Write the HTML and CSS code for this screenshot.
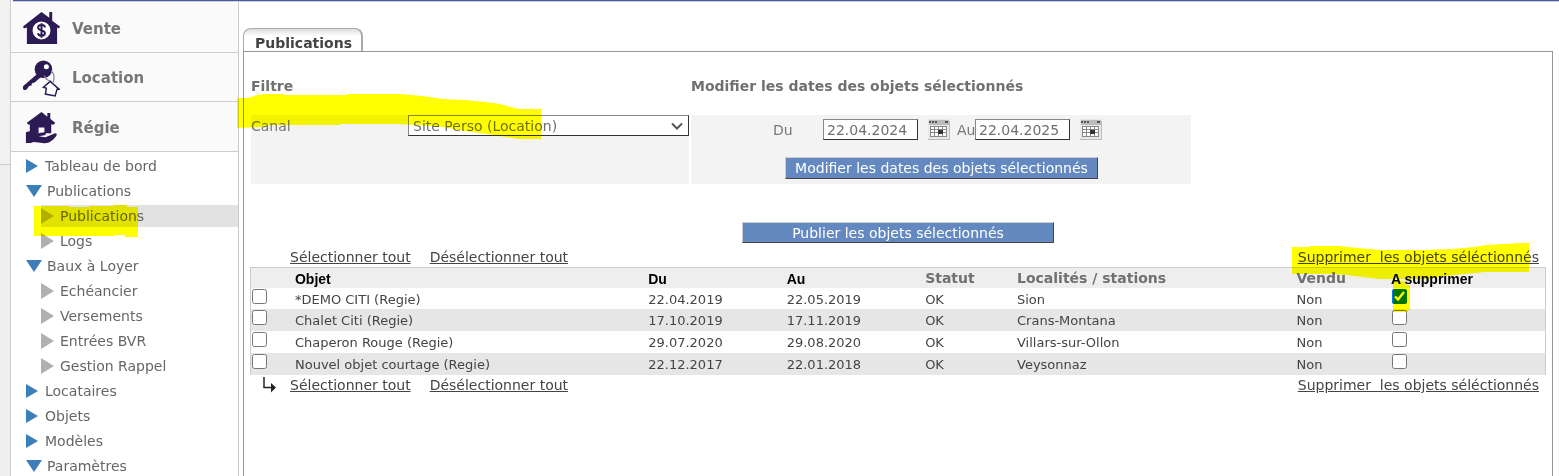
FILE: index.html
```html
<!DOCTYPE html>
<html lang="fr">
<head>
<meta charset="utf-8">
<title>Publications</title>
<link rel="stylesheet" href="styles.css">
</head>
<body>
<div class="page">
  <div class="gutter"></div>
  <div class="shell">
    <div class="topline"></div>
    <div class="columns">
      <nav class="sidebar">
        <a class="module" href="#">
          <svg class="module-icon" viewBox="0 0 38 36" aria-hidden="true"><path fill="#2b1a54" d="M19 1 0 16l1 2 3-1v17h31V17l2 1 1-2-8-6V1h-3v6z"/><circle cx="19" cy="20" r="9.200" fill="#fff"/><path d="M22.500 17c0-2-2-2.500-3.500-2.500s-3.500.5-3.500 2.500 2 2.500 3.500 3 3.500 1 3.500 3-2 2.500-3.500 2.500-3.500-.5-3.500-2.500M19 12.500v15" fill="none" stroke="#2b1a54" stroke-width="2"/></svg>
          <span>Vente</span>
        </a>
        <a class="module" href="#">
          <svg class="module-icon" viewBox="0 0 38 38" aria-hidden="true"><path d="M16 13 0 27v3l2 1 2-1 2-3 3-1v-2l3-1 7-6z" fill="#2b1a54"/><circle cx="21" cy="9.500" r="9" fill="#2b1a54"/><circle cx="24" cy="7" r="2.600" fill="#fff"/><path d="M29 11c4 4 3 8 2 12M22 16c1 4 3 5 7 6" fill="none" stroke="#8d84a3" stroke-width="1.300"/><path d="m28 22-7 6 3 1-1 6 10 2 2-7h2z" fill="#fff" stroke="#2b1a54" stroke-width="1.500"/></svg>
          <span>Location</span>
        </a>
        <a class="module" href="#">
          <svg class="module-icon" viewBox="0 0 38 36" aria-hidden="true"><path d="M19 2 4 13l1 2h2v8l9 1v-6h6v6h7v-9h3l1-2-5-4V3h-3v4z" fill="#2b1a54"/><path d="M3 23c4-2 8-1 12 1l7-1c2 0 2 3 0 3l-6 1 7 1 10-4c2 0 2 1 1 3-4 5-8 8-14 7L11 33l-3 1H3z" fill="#2b1a54"/></svg>
          <span>Régie</span>
        </a>
        <ul class="menu">
          <li><a class="item closed" href="#">Tableau de bord</a></li>
          <li><a class="item open" href="#">Publications</a>
            <ul class="submenu">
              <li><a class="item closed current" href="#">Publications</a></li>
              <li><a class="item closed" href="#">Logs</a></li>
            </ul>
          </li>
          <li><a class="item open" href="#">Baux à Loyer</a>
            <ul class="submenu">
              <li><a class="item closed" href="#">Echéancier</a></li>
              <li><a class="item closed" href="#">Versements</a></li>
              <li><a class="item closed" href="#">Entrées BVR</a></li>
              <li><a class="item closed" href="#">Gestion Rappel</a></li>
            </ul>
          </li>
          <li><a class="item closed" href="#">Locataires</a></li>
          <li><a class="item closed" href="#">Objets</a></li>
          <li><a class="item closed" href="#">Modèles</a></li>
          <li><a class="item open" href="#">Paramètres</a></li>
        </ul>
      </nav>
      <main class="main">
        <a class="tab" href="#">Publications</a>
        <section class="panel">
          <div class="filters">
            <h2>Filtre</h2>
            <h2>Modifier les dates des objets sélectionnés</h2>
            <div class="filter-box channel">
              <label for="canal">Canal</label>
              <div class="select-wrap">
                <select id="canal"><option>Site Perso (Location)</option></select>
                <svg class="chevron" viewBox="0 0 12 8" aria-hidden="true"><path d="m1 1.500 5 5 5-5" fill="none" stroke="#555" stroke-width="2"/></svg>
              </div>
            </div>
            <div class="filter-box dates">
              <div class="date-row">
                <label class="from" for="du">Du</label>
                <input class="date" id="du" type="text" value="22.04.2024">
                <button class="cal" type="button" aria-label="Choisir la date de début"><svg viewBox="0 0 22 21" aria-hidden="true"><path fill="#e8e8e8" d="M0 0h22v21H0z"/><path fill="#bbb" d="M1 1h20v5H1zM21 2h1v19h-1zM0 20h22v1H0z"/><path fill="#555" d="M1 2h2v2H1zm3 0h2v2H4zm3 0h2v2H7zm10 0h3v2h-3z"/><path fill="#fff" d="M2 7h17v11H2z"/><path d="M2 7.500h17M2 10.500h17M2 13.500h17M2 17.500h17M2.500 7v11M6.500 7v11M10.500 7v11M14.500 7v11M18.500 7v11" stroke="#888"/><path fill="#333" d="M10 11h5v4h-5z"/></svg></button>
                <label class="to" for="au">Au</label>
                <input class="date" id="au" type="text" value="22.04.2025">
                <button class="cal" type="button" aria-label="Choisir la date de fin"><svg viewBox="0 0 22 21" aria-hidden="true"><path fill="#e8e8e8" d="M0 0h22v21H0z"/><path fill="#bbb" d="M1 1h20v5H1zM21 2h1v19h-1zM0 20h22v1H0z"/><path fill="#555" d="M1 2h2v2H1zm3 0h2v2H4zm3 0h2v2H7zm10 0h3v2h-3z"/><path fill="#fff" d="M2 7h17v11H2z"/><path d="M2 7.500h17M2 10.500h17M2 13.500h17M2 17.500h17M2.500 7v11M6.500 7v11M10.500 7v11M14.500 7v11M18.500 7v11" stroke="#888"/><path fill="#333" d="M10 11h5v4h-5z"/></svg></button>
              </div>
              <button class="action" type="button">Modifier les dates des objets sélectionnés</button>
            </div>
          </div>
          <button class="action publish" type="button">Publier les objets sélectionnés</button>
          <div class="links top">
            <span class="lead"></span>
            <a href="#">Sélectionner tout</a>
            <a href="#">Désélectionner tout</a>
            <a class="remove" href="#">Supprimer&nbsp; les objets séléctionnés</a>
          </div>
          <table class="objects">
            <colgroup><col class="c-check"><col class="c-name"><col class="c-date"><col class="c-date"><col class="c-status"><col class="c-place"><col class="c-sold"><col></colgroup>
            <thead>
              <tr><th></th><th>Objet</th><th>Du</th><th>Au</th><th class="soft">Statut</th><th class="soft">Localités / stations</th><th class="soft">Vendu</th><th>A supprimer</th></tr>
            </thead>
            <tbody>
              <tr><td class="tick"><input type="checkbox" aria-label="Sélectionner *DEMO CITI"></td><td>*DEMO CITI (Regie)</td><td>22.04.2019</td><td>22.05.2019</td><td>OK</td><td>Sion</td><td>Non</td><td class="tick"><input type="checkbox" checked aria-label="Supprimer *DEMO CITI"></td></tr>
              <tr><td class="tick"><input type="checkbox" aria-label="Sélectionner Chalet Citi"></td><td>Chalet Citi (Regie)</td><td>17.10.2019</td><td>17.11.2019</td><td>OK</td><td>Crans-Montana</td><td>Non</td><td class="tick"><input type="checkbox" aria-label="Supprimer Chalet Citi"></td></tr>
              <tr><td class="tick"><input type="checkbox" aria-label="Sélectionner Chaperon Rouge"></td><td>Chaperon Rouge (Regie)</td><td>29.07.2020</td><td>29.08.2020</td><td>OK</td><td>Villars-sur-Ollon</td><td>Non</td><td class="tick"><input type="checkbox" aria-label="Supprimer Chaperon Rouge"></td></tr>
              <tr><td class="tick"><input type="checkbox" aria-label="Sélectionner Nouvel objet courtage"></td><td>Nouvel objet courtage (Regie)</td><td>22.12.2017</td><td>22.01.2018</td><td>OK</td><td>Veysonnaz</td><td>Non</td><td class="tick"><input type="checkbox" aria-label="Supprimer Nouvel objet courtage"></td></tr>
            </tbody>
          </table>
          <div class="links">
            <span class="lead"><svg class="hook" viewBox="0 0 14 16" aria-hidden="true"><path d="M1 0v10.500h9" fill="none" stroke="#222" stroke-width="1.500"/><path d="M8 6v9.500l5-5z" fill="#222"/></svg></span>
            <a href="#">Sélectionner tout</a>
            <a href="#">Désélectionner tout</a>
            <a class="remove" href="#">Supprimer&nbsp; les objets séléctionnés</a>
          </div>
        </section>
      </main>
    </div>
  </div>
</div>
<svg class="marker" width="1559" height="476" aria-hidden="true">
  <path d="M237 98H248L257 95 265 94H284V95H347V94H397L412 95 430 97 443 99 464 100 485 102 500 104 518 109H541V139H518L500 136 486 134 465 131 443 127 420 125 394 124H340V125H270L261 127 237 128z"/>
  <path d="M34 206h35v1h21v-1h24v-1h13v2h11v30h-13v-2h-9l-2 1H34z"/>
  <path d="M1292 247h17v-1h30l18 2 24 2h42l30-1 21-2 13-2 17-1 17-1h8v29h-44l-20 2-20 2-17 3h-48l-18-2-15-2-15-1h-40z"/>
  <path d="M1393 281h13v4h4v25h-2v2h-15z"/>
</svg>
</body>
</html>
```
FILE: styles.css
```css
* { box-sizing: border-box; }
body {
  margin: 0;
  background: #fff;
  color: #666;
  font: 14px/18px Verdana, "DejaVu Sans", sans-serif;
  position: relative;
  overflow: hidden;
}
a { color: inherit; text-decoration: none; }
ul { list-style: none; margin: 0; padding: 0; }
.page { display: flex; min-height: 100vh; }
.gutter {
  width: 11px;
  flex: none;
  background: linear-gradient(#efefef, #efefef) 0 165px no-repeat, linear-gradient(#ccc, #ccc) 0 164px / 100% 1px no-repeat, #f1f1f1;
  border-right: 1px solid #ccc;
}
.shell { flex: 1; min-width: 0; display: flex; flex-direction: column; }
.topline { height: 2px; margin-left: 2px; background: #4a5c99; border-bottom: 1px solid #c9cbe0; }
.columns { display: flex; flex: 1; }

.sidebar { width: 228px; flex: none; padding-top: 1px; border-right: 1px solid #ccc; height: calc(100vh - 2px); overflow: hidden; }
.module {
  display: flex;
  align-items: center;
  gap: 12px;
  height: 49px;
  padding: 2px 0 0 12px;
  background: #fafafa;
  border-bottom: 1px solid #ccc;
  color: #777;
  font-size: 15px;
  font-weight: bold;
}
.module:nth-child(1), .module:nth-child(3) { height: 50px; }
.module-icon { width: 37px; height: 37px; }
.menu { padding-top: 3px; }
.item { display: flex; align-items: center; height: 22px; margin-bottom: 3px; margin-left: 15px; }
.item::before { content: ""; flex: none; background: #3c7fb8; }
.closed::before { width: 12px; height: 14px; margin-right: 7px; clip-path: polygon(0 0, 100% 50%, 0 100%); }
.open::before { width: 16px; height: 12px; margin-right: 5px; clip-path: polygon(0 0, 100% 0, 50% 100%); }
.submenu .item { margin-left: 30px; }
.submenu .item::before { background: #b0b0b0; width: 13px; height: 16px; margin-right: 6px; }
.submenu .current { background: #e2e2e2; }

.main { flex: 1; min-width: 0; display: flex; flex-direction: column; align-items: flex-start; padding: 26px 6px 0 4px; }
.tab {
  padding: 5px 9px 0 11px;
  height: 23px;
  border: 1px solid #aaa;
  border-width: 1px 2px 0 1px;
  border-radius: 8px 8px 0 0;
  background: linear-gradient(#ddd, #fff 7px);
  color: #444;
  font-weight: bold;
}
.panel { align-self: stretch; flex: 1; border: 1px solid #909898; border-bottom: 0; padding: 25px 6px 0; }
.filters { display: grid; grid-template-columns: 438px 500px; column-gap: 2px; padding-left: 1px; }
h2 { margin: 0; font: bold 14px/18px Verdana, "DejaVu Sans", sans-serif; height: 38px; color: #707070; }
.filter-box { background: #f3f3f3; height: 69px; color: #777; }
.channel { display: flex; justify-content: space-between; align-items: flex-start; }
.channel label { padding-top: 2px; }
.select-wrap { position: relative; width: 281px; }
.select-wrap select { width: 100%; }
.chevron { position: absolute; right: 6px; top: 7px; width: 12px; height: 8px; pointer-events: none; }
select, .date {
  appearance: none;
  height: 21px;
  margin: 0;
  padding: 0 4px;
  border: 1px solid;
  border-color: #888 #333 #333 #888;
  border-radius: 0;
  background: #fff;
  color: #707070;
  font: 14px/18px Verdana, "DejaVu Sans", sans-serif;
}
.date-row { display: flex; align-items: center; padding: 4px 0 0 82px; }
.from { width: 50px; }
.to { margin-left: 7px; width: 18px; }
.date { width: 95px; padding: 0 3px; }
.cal { width: 22px; height: 21px; padding: 0; margin-left: 10px; border: 0; background: none; }
.cal svg { display: block; }
.dates { display: flex; flex-direction: column; gap: 17px; }
.action {
  height: 22px;
  padding: 0;
  border: 1px solid;
  border-color: #ccc #444 #444 #ccc;
  background: #6489c0;
  color: #fff;
  font: 14px/18px Verdana, "DejaVu Sans", sans-serif;
}
.dates .action { width: 313px; margin-left: 94px; }
.publish { display: block; width: 312px; height: 21px; margin: 38px auto 0; }
.links { display: flex; align-items: center; height: 20px; color: #444; }
.links.top { margin-top: 4px; }
.links a { text-decoration: underline; margin-right: 19px; }
.links .remove { margin: 0 7px 0 auto; }
.lead { width: 40px; padding-left: 13px; }
.hook { display: block; width: 14px; height: 16px; }
.objects {
  width: 100%;
  table-layout: fixed;
  border-collapse: separate;
  border-spacing: 0;
  border: 1px solid #ccc;
  border-bottom: 0;
  color: #444;
  font-size: 13px;
  line-height: 16px;
}
.objects th, .objects td { padding: 2px 0 0; text-align: left; white-space: nowrap; height: 22px; vertical-align: middle; }
.objects th { height: 20px; background: #eee; color: #000; font: bold 14px/16px "Liberation Sans", Arial, sans-serif; }
.objects th.soft { padding: 0; color: #707070; font-family: Verdana, "DejaVu Sans", sans-serif; }
.objects tr:first-child td { height: 21px; }
.objects tr:nth-child(even) td { background: #e6e6e6; }
.objects td.tick { padding: 0; }
.objects input { display: block; width: 15px; height: 15px; margin: 0 0 5px 1px; }
.c-check { width: 3.4%; }
.c-name { width: 27.3%; }
.c-date { width: 10.7%; }
.c-status { width: 7.1%; }
.c-place { width: 21.6%; }
.c-sold { width: 7.3%; }

.marker { position: absolute; left: 0; top: 0; fill: #ff0; mix-blend-mode: multiply; pointer-events: none; }
```
